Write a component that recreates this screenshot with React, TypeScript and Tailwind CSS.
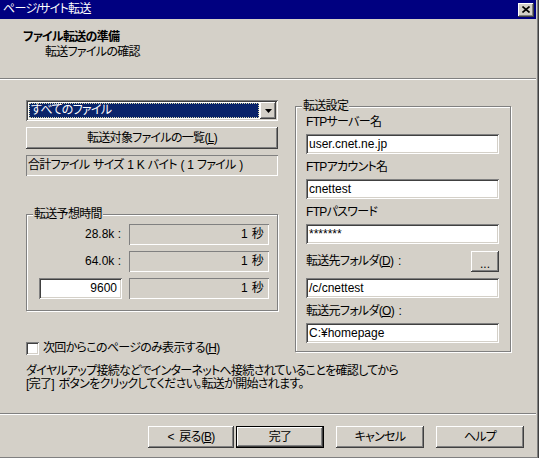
import React from 'react';

const raised =
  'bg-[#d4d0c8] shadow-[inset_-1px_-1px_#404040,inset_1px_1px_#ffffff,inset_-2px_-2px_#808080,inset_2px_2px_#d4d0c8]';
const sunken =
  'shadow-[inset_1px_1px_#808080,inset_-1px_-1px_#ffffff,inset_2px_2px_#404040,inset_-2px_-2px_#d4d0c8]';
const thinSunken = 'shadow-[inset_1px_1px_#808080,inset_-1px_-1px_#ffffff]';
const etched = 'border border-[#808080] shadow-[inset_1px_1px_#ffffff,1px_1px_#ffffff]';

const U = ({ children }: { children: React.ReactNode }) => (
  <span className="underline underline-offset-[1px]">{children}</span>
);

const Edit = ({ value }: { value: string }) => (
  <div className={`h-[20px] bg-white ${sunken} flex items-center px-[3px] tracking-normal`}>{value}</div>
);

const TimeRow = ({ label, edit }: { label?: string; edit?: string }) => (
  <div className="flex h-[21px] items-center">
    {edit ? (
      <div className="w-[83px]">
        <div className={`h-[21px] bg-white ${sunken} flex items-center justify-end pr-[5px] tracking-normal`}>
          {edit}
        </div>
      </div>
    ) : (
      <div className="w-[83px] text-right pr-[1px] tracking-normal">{label}</div>
    )}
    <div
      className={`ml-[7px] w-[140px] h-[21px] ${thinSunken} flex items-center justify-end pr-[6px] [word-spacing:2px]`}
    >
      1 秒
    </div>
  </div>
);

const Button = ({
  children,
  width,
  isDefault,
}: {
  children: React.ReactNode;
  width: string;
  isDefault?: boolean;
}) =>
  isDefault ? (
    <div className={`${width} h-[22px] border border-black`}>
      <div className={`h-full ${raised} flex items-center justify-center`}>{children}</div>
    </div>
  ) : (
    <div className={`${width} h-[22px] ${raised} flex items-center justify-center`}>{children}</div>
  );

export default function App() {
  return (
    <div className="w-[539px] h-[458px] bg-[#404040] pr-px font-['Liberation_Sans','Noto_Sans_CJK_JP',sans-serif] text-[12px] leading-[15px] tracking-[-0.7px] text-black [font-feature-settings:'palt']">
      <div className="h-full bg-[#808080] pr-px pb-px">
        <div className="h-full bg-[#d4d0c8] pr-px flex flex-col">
          {/* title bar */}
          <div className="h-[19px] bg-[#000080] flex items-center justify-between pl-[3px] pr-[2px] shrink-0">
            <span className="text-white">ページ/サイト転送</span>
            <div className={`w-[16px] h-[14px] ${raised} flex items-center justify-center`}>
              <svg width="8" height="7" viewBox="0 0 8 7">
                <path d="M0.5 0.5 L7.5 6.5 M7.5 0.5 L0.5 6.5" stroke="#000" strokeWidth="1.6" />
              </svg>
            </div>
          </div>

          {/* header */}
          <div className="h-[59px] shrink-0 pt-[11px]">
            <div className="pl-[23px] font-bold">ファイル転送の準備</div>
            <div className="pl-[45px]">転送ファイルの確認</div>
          </div>
          <div className="h-px bg-[#808080] shrink-0" />
          <div className="h-px bg-white shrink-0" />

          {/* main */}
          <div className="h-[333px] shrink-0">
            <div className="flex items-start pl-[26px]">
              <div className="w-[252px] mt-[20px] flex flex-col">
                {/* combo */}
                <div className={`h-[21px] bg-white ${sunken} p-[2px] flex`}>
                  <div className="flex-1 p-px">
                    <div className="h-full bg-[#0a246a] text-white outline-1 outline-dotted outline-[#d8d8a8] -outline-offset-1 flex items-center pl-[2px]">
                      すべてのファイル
                    </div>
                  </div>
                  <div className={`w-[16px] ${raised} flex items-center justify-center`}>
                    <svg width="7" height="4" viewBox="0 0 7 4">
                      <polygon points="0,0 7,0 3.5,4" fill="#000" />
                    </svg>
                  </div>
                </div>

                <div className="mt-[6px]">
                  <Button width="w-full">
                    転送対象ファイルの一覧(<U>L</U>)
                  </Button>
                </div>

                <div className={`mt-[6px] h-[21px] ${thinSunken} flex items-center pl-[2px] [word-spacing:1px]`}>
                  合計ファイル サイズ 1 K バイト ( 1 ファイル )
                </div>

                {/* time group */}
                <div className={`relative mt-[38px] h-[97px] ${etched} pt-[9px] pl-[12px] flex flex-col gap-[6px]`}>
                  <span className="absolute left-[6px] -top-[8px] bg-[#d4d0c8] px-px">転送予想時間</span>
                  <TimeRow label="28.8k :" />
                  <TimeRow label="64.0k :" />
                  <TimeRow edit="9600" />
                </div>

                <div className="mt-[31px] flex items-center h-[13px]">
                  <div className={`w-[13px] h-[13px] shrink-0 bg-white ${sunken}`} />
                  <span className="ml-[4px] whitespace-nowrap">
                    次回からこのページのみ表示する(<U>H</U>)
                  </span>
                </div>
              </div>

              {/* transfer settings group */}
              <div className={`relative ml-[17px] mt-[26px] w-[216px] ${etched} pt-[7px] pl-[10px] pr-[11px] pb-[8px] flex flex-col`}>
                <span className="absolute left-[6px] -top-[8px] bg-[#d4d0c8] px-px">転送設定</span>
                <div className="h-[16px] leading-[16px]">FTPサーバー名</div>
                <div className="mt-[4px]">
                  <Edit value="user.cnet.ne.jp" />
                </div>
                <div className="mt-[5px] h-[16px] leading-[16px]">FTPアカウント名</div>
                <div className="mt-[4px]">
                  <Edit value="cnettest" />
                </div>
                <div className="mt-[5px] h-[16px] leading-[16px]">FTPパスワード</div>
                <div className="mt-[4px]">
                  <Edit value="*******" />
                </div>
                <div className="mt-[7px] h-[21px] flex items-center justify-between">
                  <span className="[word-spacing:2px]">
                    転送先フォルダ(<U>D</U>) :
                  </span>
                  <div className={`w-[28px] h-[21px] ${raised} flex items-end justify-center pb-[4px] leading-[8px] tracking-normal`}>
                    ...
                  </div>
                </div>
                <div className="mt-[6px]">
                  <Edit value="/c/cnettest" />
                </div>
                <div className="mt-[5px] h-[16px] leading-[16px] [word-spacing:2px]">
                  転送元フォルダ(<U>O</U>) :
                </div>
                <div className="mt-[4px]">
                  <Edit value="C:¥homepage" />
                </div>
              </div>
            </div>

            <div className="mt-[10px] pl-[26px] leading-[13px]">
              <div>ダイヤルアップ接続などでインターネットへ接続されていることを確認してから</div>
              <div className="[word-spacing:2px]">[完了] ボタンをクリックしてください。転送が開始されます。</div>
            </div>
          </div>

          <div className="h-px bg-[#808080] shrink-0" />
          <div className="h-px bg-white shrink-0" />

          {/* footer */}
          <div className="mt-[11px] flex pl-[148px]">
            <Button width="w-[86px]">
              <span className="[word-spacing:3px]">
                &lt; 戻る(<U>B</U>)
              </span>
            </Button>
            <div className="ml-[2px]">
              <Button width="w-[88px]" isDefault>
                完了
              </Button>
            </div>
            <div className="ml-[12px]">
              <Button width="w-[88px]">キャンセル</Button>
            </div>
            <div className="ml-[12px]">
              <Button width="w-[88px]">ヘルプ</Button>
            </div>
          </div>
        </div>
      </div>
    </div>
  );
}
